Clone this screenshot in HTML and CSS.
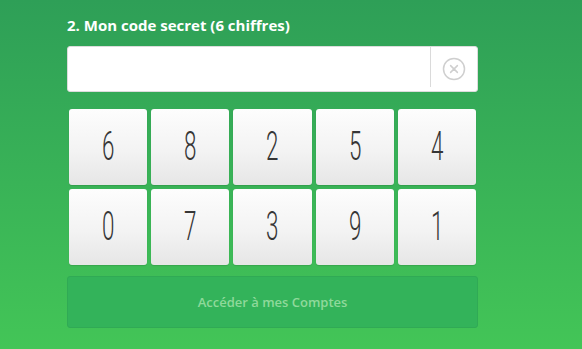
FILE: index.html
```html
<!DOCTYPE html>
<html lang="fr">
<head>
    <meta charset="UTF-8">
    <title>Mon code secret</title>
    <link rel="stylesheet" href="styles.css">
</head>
<body>
    <div class="container">
        <label class="code-label" for="codeInput">2. Mon code secret (6 chiffres)</label>

        <div class="code-field">
            <input type="password" id="codeInput" readonly>
            <button class="clear-btn" type="button" aria-label="Effacer">
                <svg width="24" height="24" viewBox="0 0 24 24">
                    <circle cx="12" cy="12" r="10.5" fill="none" stroke="#cfcfcf" stroke-width="1.5"/>
                    <path d="M8.6 8.6 L15.4 15.4 M15.4 8.6 L8.6 15.4" stroke="#cfcfcf" stroke-width="1.5" stroke-linecap="round"/>
                </svg>
            </button>
        </div>

        <div class="keypad">
            <button class="key" type="button"><span>6</span></button>
            <button class="key" type="button"><span>8</span></button>
            <button class="key" type="button"><span>2</span></button>
            <button class="key" type="button"><span>5</span></button>
            <button class="key" type="button"><span>4</span></button>
            <button class="key" type="button"><span>0</span></button>
            <button class="key" type="button"><span>7</span></button>
            <button class="key" type="button"><span>3</span></button>
            <button class="key" type="button"><span>9</span></button>
            <button class="key" type="button"><span>1</span></button>
        </div>

        <button class="submit-btn" type="button" disabled>Accéder à mes Comptes</button>
    </div>
</body>
</html>
```

FILE: styles.css
```css
* {
    box-sizing: border-box;
    margin: 0;
    padding: 0;
}

html, body {
    height: 100%;
}

body {
    font-family: "Open Sans", "Liberation Sans", sans-serif;
    background: linear-gradient(to bottom, #2e9f57 0%, #43c557 100%);
    overflow: hidden;
}

.container {
    width: 411px;
    margin-left: 67px;
    padding-top: 14px;
}

.code-label {
    display: block;
    color: #ffffff;
    font-size: 15px;
    font-weight: 700;
    line-height: 22px;
    margin-bottom: 10px;
}

.code-field {
    display: flex;
    height: 46px;
    background-color: #ffffff;
    border: 1px solid #dcdcdc;
    border-radius: 3px;
}

#codeInput {
    flex: 1;
    border: none;
    background: transparent;
    outline: none;
    padding: 0 12px;
    font-size: 18px;
}

.clear-btn {
    width: 47px;
    margin: 0 0 4px;
    border: none;
    border-left: 1px solid #dadada;
    background: transparent;
    display: flex;
    align-items: center;
    justify-content: center;
    padding-top: 4px;
    cursor: pointer;
}

.keypad {
    display: grid;
    grid-template-columns: repeat(5, 1fr);
    margin-top: 15px;
}

.key {
    height: 76px;
    margin: 2px;
    border: none;
    border-radius: 3px;
    background: linear-gradient(to bottom, #fdfdfd 0%, #f3f3f3 55%, #e6e6e6 100%);
    box-shadow: 0 1px 1px rgba(0, 0, 0, 0.12);
    color: #363636;
    cursor: pointer;
    display: flex;
    align-items: center;
    justify-content: center;
}

.key span {
    display: inline-block;
    font-family: Roboto, "Liberation Sans Narrow", "Liberation Sans", sans-serif;
    font-size: 40px;
    font-weight: 300;
    line-height: 1;
    transform: scaleX(0.56);
}

.submit-btn {
    display: block;
    width: 100%;
    height: 52px;
    margin-top: 9px;
    border: 1px solid #30aa55;
    border-radius: 3px;
    background-color: #33b35a;
    color: #8fd99b;
    font-family: "Open Sans", "Liberation Sans", sans-serif;
    font-size: 13px;
    font-weight: 600;
}
```
